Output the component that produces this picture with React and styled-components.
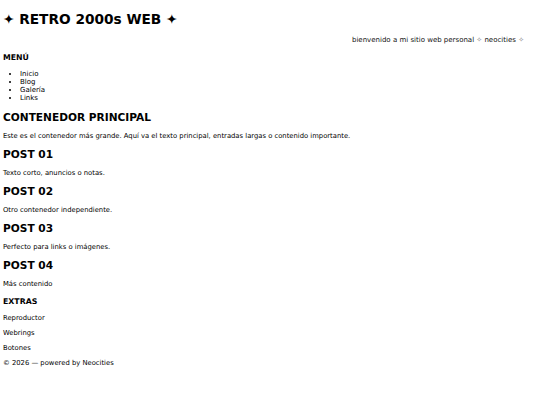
import React from 'react';
import styled, { createGlobalStyle } from 'styled-components';

const GlobalStyle = createGlobalStyle`
  html, body {
    margin: 0;
    padding: 0;
    background: #ffffff;
  }
  body {
    font-family: "DejaVu Sans", Verdana, sans-serif;
    color: #000000;
  }
`;

const Page = styled.div`
  padding: 11px 3px 20px 3px;
  display: flex;
  flex-direction: column;
`;

const Header = styled.header`
  display: flex;
  flex-direction: column;
`;

const Title = styled.h1`
  margin: 0;
  font-size: 13.7px;
  line-height: 16px;
  font-weight: bold;
`;

const Marquee = styled.div`
  margin-top: 9px;
  padding-right: 13px;
  text-align: right;
  font-size: 7px;
  line-height: 9px;
  color: #111;
`;

const Star = styled.span`
  color: #888;
`;

const Menu = styled.nav`
  margin-top: 7px;
`;

const SmallHeading = styled.h3`
  margin: 0;
  font-size: 7.8px;
  line-height: 11px;
  font-weight: bold;
`;

const MenuList = styled.ul`
  margin: 7px 0 0 0;
  padding-left: 17px;
  list-style: disc;
  font-size: 7px;
  line-height: 8px;
`;

const Main = styled.main`
  margin-top: 9px;
  display: flex;
  flex-direction: column;
  gap: 7px;
`;

const Box = styled.section`
  display: flex;
  flex-direction: column;
  gap: 8px;
`;

const BoxTitle = styled.h2`
  margin: 0;
  font-size: 10.6px;
  line-height: 13px;
  font-weight: bold;
`;

const Text = styled.p`
  margin: 0;
  font-size: 6.8px;
  line-height: 9px;
`;

const Extras = styled.aside`
  margin-top: 7px;
  display: flex;
  flex-direction: column;
  gap: 6px;
`;

const ExtrasHead = styled(SmallHeading)`
  margin-bottom: 1px;
`;

const Footer = styled.footer`
  margin-top: 6px;
  font-size: 6.8px;
  line-height: 9px;
`;

const posts = [
  { title: 'POST 01', text: 'Texto corto, anuncios o notas.' },
  { title: 'POST 02', text: 'Otro contenedor independiente.' },
  { title: 'POST 03', text: 'Perfecto para links o imágenes.' },
  { title: 'POST 04', text: 'Más contenido' },
];

export default function App() {
  return (
    <>
      <GlobalStyle />
      <Page>
        <Header>
          <Title>✦ RETRO 2000s WEB ✦</Title>
          <Marquee>
            bienvenido a mi sitio web personal <Star>✧</Star> neocities <Star>✧</Star>
          </Marquee>
        </Header>

        <Menu>
          <SmallHeading>MENÚ</SmallHeading>
          <MenuList>
            <li>Inicio</li>
            <li>Blog</li>
            <li>Galería</li>
            <li>Links</li>
          </MenuList>
        </Menu>

        <Main>
          <Box>
            <BoxTitle>CONTENEDOR PRINCIPAL</BoxTitle>
            <Text>
              Este es el contenedor más grande. Aquí va el texto principal, entradas largas o contenido importante.
            </Text>
          </Box>
          {posts.map((p) => (
            <Box key={p.title}>
              <BoxTitle>{p.title}</BoxTitle>
              <Text>{p.text}</Text>
            </Box>
          ))}
        </Main>

        <Extras>
          <ExtrasHead>EXTRAS</ExtrasHead>
          <Text>Reproductor</Text>
          <Text>Webrings</Text>
          <Text>Botones</Text>
        </Extras>

        <Footer>© 2026 — powered by Neocities</Footer>
      </Page>
    </>
  );
}
